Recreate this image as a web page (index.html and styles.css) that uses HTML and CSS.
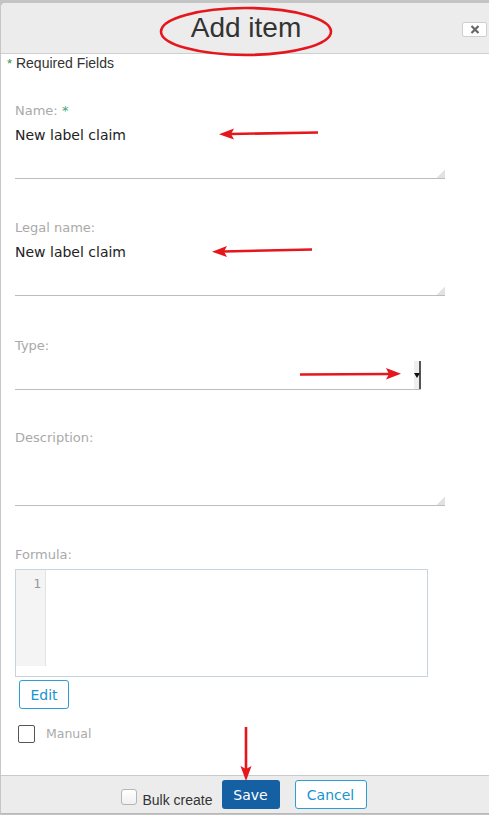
FILE: index.html
```html
<!DOCTYPE html>
<html>
<head>
<meta charset="utf-8">
<link rel="stylesheet" href="styles.css">
</head>
<body>
<div class="dialog">
  <div class="header">
    <span></span>
    <h1 class="title">Add item</h1>
    <button class="close" aria-label="Close">
      <svg width="10" height="9" viewBox="0 0 10 9"><path d="M1.5 1 L8.5 8 M8.5 1 L1.5 8" stroke="#666" stroke-width="2.2" fill="none"/></svg>
    </button>
  </div>
  <div class="content">
    <div class="required"><span class="star">*</span> Required Fields</div>

    <div class="field first">
      <div class="label">Name: <span class="star2">*</span></div>
      <div class="textarea">New label claim<span class="grip"></span></div>
    </div>

    <div class="field legal">
      <div class="label">Legal name:</div>
      <div class="textarea">New label claim<span class="grip"></span></div>
    </div>

    <div class="field type">
      <div class="label">Type:</div>
      <div class="select"><span class="sel-btn"><span class="tri"></span></span></div>
    </div>

    <div class="field desc">
      <div class="label">Description:</div>
      <div class="textarea"><span class="grip"></span></div>
    </div>

    <div class="field formula">
      <div class="label">Formula:</div>
      <div class="editor">
        <div class="gutter">1</div>
        <div class="code"></div>
      </div>
    </div>

    <button class="btn-edit">Edit</button>

    <div class="manual">
      <span class="cb-manual"></span>
      <span class="manual-text">Manual</span>
    </div>
  </div>
  <div class="footer">
    <div class="bulk">
      <span class="cb-bulk"></span>
      <span class="bulk-text">Bulk create</span>
    </div>
    <button class="btn-save">Save</button>
    <button class="btn-cancel">Cancel</button>
  </div>
</div>

<svg class="annot" width="489" height="815" viewBox="0 0 489 815">
  <ellipse cx="246" cy="31.5" rx="85" ry="23.5" fill="none" stroke="#e5161c" stroke-width="2.6"/>
  <g stroke="#e5161c" stroke-width="2.6" fill="#e5161c">
    <line x1="318" y1="132.5" x2="230" y2="134"/>
    <polygon stroke="none" points="219,134.2 234,128.5 231,134 234,139.5"/>
    <line x1="312" y1="249.5" x2="223" y2="251.5"/>
    <polygon stroke="none" points="212,251.8 227,246 224,251.5 227,257"/>
    <line x1="300" y1="374.5" x2="390" y2="374"/>
    <polygon stroke="none" points="401,373.8 386,368 389,374 386,379.5"/>
    <line x1="246" y1="727" x2="246" y2="770"/>
    <polygon stroke="none" points="246,781 240.5,766 246,769 251.5,766"/>
  </g>
</svg>
</body>
</html>
```

FILE: styles.css
```css
html, body {
  margin: 0;
  padding: 0;
}
body {
  background: #c4c4c4;
  width: 489px;
  height: 815px;
  overflow: hidden;
  position: relative;
  font-family: "DejaVu Sans", sans-serif;
}
.dialog {
  margin-top: 3px;
  width: 488px;
  height: 810px;
  background: #fff;
  border-left: 1px solid #c6c6c6;
  border-bottom: 1px solid #b8b8b8;
  border-radius: 5px 0 0 3px;
  display: flex;
  flex-direction: column;
  overflow: hidden;
}
.header {
  height: 50px;
  background: #ececec;
  border-bottom: 1px solid #cfcfcf;
  display: grid;
  grid-template-columns: 1fr auto 1fr;
  align-items: center;
  flex: none;
}
.title {
  margin: 0;
  font-family: "Liberation Sans", Arial, sans-serif;
  font-weight: normal;
  font-size: 28px;
  line-height: 32px;
  color: #333;
  padding-left: 2px;
}
.close {
  justify-self: end;
  margin-right: 2px;
  margin-top: 2px;
  width: 25px;
  height: 15px;
  padding: 0;
  border: 1px solid #cfcfcf;
  background: #fff;
  border-radius: 2px;
  display: flex;
  align-items: center;
  justify-content: center;
}
.close svg { display: block; }
.content {
  flex: 1;
  padding: 0 0 0 14px;
  display: flex;
  flex-direction: column;
  align-items: flex-start;
}
.required {
  margin-left: -8px;
  font-family: "Liberation Sans", Arial, sans-serif;
  font-size: 14px;
  line-height: 18px;
  color: #333;
}
.star {
  color: #2c9a3a;
  font-size: 13px;
}
.field {
  margin-top: 40px;
  display: flex;
  flex-direction: column;
}
.field.first { margin-top: 30px; }
.field.legal { margin-top: 41px; }
.field.type { margin-top: 42px; }
.field.desc { margin-top: 40px; }
.field.formula { margin-top: 41px; }
.label {
  font-size: 13px;
  line-height: 16px;
  height: 16px;
  color: #a9a9a9;
}
.star2 { color: #3aa876; }
.textarea {
  position: relative;
  width: 430px;
  box-sizing: content-box;
  border-bottom: 1px solid #bdbdbd;
  font-size: 14px;
  line-height: 18px;
  color: #222;
  padding-top: 7px;
  height: 52px;
}
.grip {
  position: absolute;
  right: 0;
  bottom: 0;
  width: 8px;
  height: 8px;
  background: linear-gradient(135deg, transparent 50%, #e2e2e2 50%);
}
.select {
  width: 406px;
  height: 35px;
  border-bottom: 1px solid #bdbdbd;
  display: flex;
  justify-content: flex-end;
  align-items: flex-end;
}
.sel-btn {
  width: 7px;
  height: 28px;
  background: #efefef;
  border-right: 2px solid #555;
  display: flex;
  align-items: flex-start;
  justify-content: center;
  padding-top: 12px;
  box-sizing: border-box;
}
.tri {
  width: 0;
  height: 0;
  border-left: 3px solid transparent;
  border-right: 3px solid transparent;
  border-top: 5px solid #111;
}
.editor {
  margin-top: 6px;
  width: 411px;
  height: 106px;
  border: 1px solid #c8d5de;
  display: flex;
  align-items: flex-start;
}
.gutter {
  width: 30px;
  height: 96px;
  background: #f4f4f4;
  border-right: 1px solid #e3e3e3;
  box-sizing: border-box;
  text-align: right;
  padding: 5px 4px 0 0;
  font-family: "DejaVu Sans Mono", monospace;
  font-size: 13px;
  line-height: 18px;
  color: #999;
}
.code { flex: 1; }
.btn-edit {
  margin-top: 3px;
  margin-left: 4px;
  width: 50px;
  height: 29px;
  border: 1px solid #2a9fd6;
  border-radius: 3px;
  background: #fff;
  color: #1a93cf;
  font-family: "DejaVu Sans", sans-serif;
  font-size: 14px;
  padding: 0;
}
.manual {
  margin-top: 16px;
  margin-left: 3px;
  display: flex;
  align-items: center;
  gap: 11px;
}
.cb-manual {
  width: 17px;
  height: 18px;
  box-sizing: border-box;
  border: 1px solid #555;
  border-radius: 2px;
  background: #fff;
}
.manual-text {
  font-size: 12.5px;
  color: #aaa;
  line-height: 16px;
}
.footer {
  flex: none;
  height: 37px;
  border-top: 1px solid #cacaca;
  background: #ececec;
  display: flex;
  align-items: center;
  justify-content: center;
  padding-right: 2px;
}
.bulk {
  display: flex;
  align-items: center;
  margin-right: 9px;
}
.cb-bulk {
  width: 16px;
  height: 16px;
  box-sizing: border-box;
  border: 1px solid #b5b5b5;
  border-radius: 3px;
  background: linear-gradient(#fff, #f0f0f0);
  margin-top: 5px;
  margin-right: 5px;
}
.bulk-text {
  font-family: "Liberation Sans", Arial, sans-serif;
  font-size: 14px;
  line-height: 16px;
  color: #333;
  margin-top: 11px;
}
.btn-save {
  width: 58px;
  height: 29px;
  border: none;
  border-radius: 3px;
  background: #155fa3;
  color: #fff;
  font-family: "DejaVu Sans", sans-serif;
  font-size: 14px;
  padding: 0;
  margin-right: 15px;
}
.btn-cancel {
  width: 72px;
  height: 29px;
  border: 1px solid #2a9fd6;
  border-radius: 3px;
  background: #fff;
  color: #1a93cf;
  font-family: "DejaVu Sans", sans-serif;
  font-size: 14px;
  padding: 0;
}
.annot {
  position: absolute;
  left: 0;
  top: 0;
  pointer-events: none;
}
```
